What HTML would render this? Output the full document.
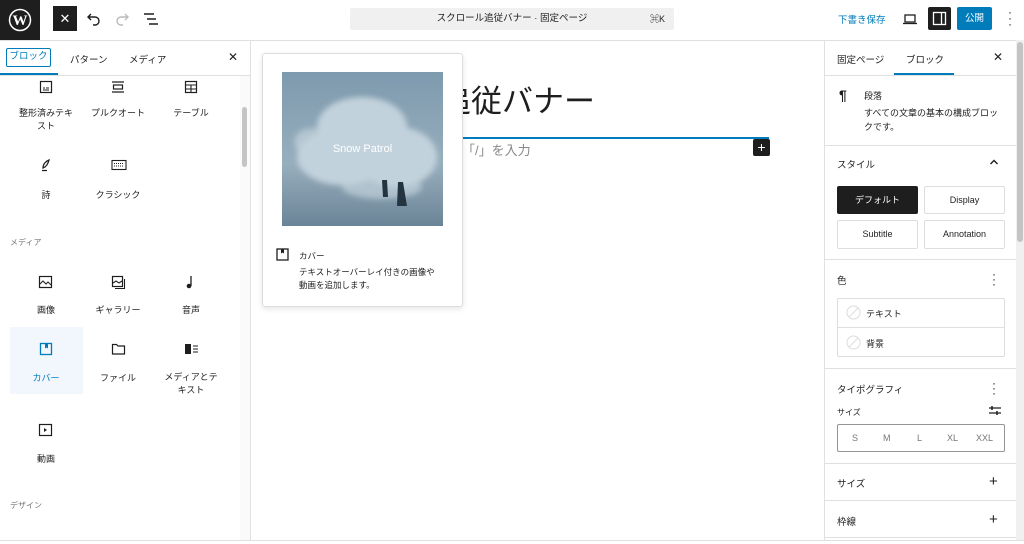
<!DOCTYPE html><html><head><meta charset="utf-8"><style>
*{box-sizing:border-box;margin:0;padding:0}
body{width:1024px;height:544px;overflow:hidden;background:#fff;font-family:"Liberation Sans","Noto Sans CJK JP",sans-serif;color:#1e1e1e;position:relative;font-size:9px}
.a{position:absolute}
.c{text-align:center}
.hl{position:absolute;height:1px;background:#e0e0e0}
.vl{position:absolute;width:1px;background:#e0e0e0}
svg{position:absolute}
</style></head><body>
<!-- top bar -->
<div class="a" style="left:0;top:0;width:40px;height:40px;background:#1e1e1e"></div>
<svg style="left:8px;top:8px" width="24" height="24" viewBox="0 0 24 24"><circle cx="12" cy="12" r="10.5" fill="none" stroke="#fff" stroke-width="1.5"/><text x="12" y="17" text-anchor="middle" font-family="Liberation Serif" font-weight="bold" font-size="15" fill="#fff">W</text></svg>
<div class="a" style="left:53px;top:6px;width:24px;height:25px;background:#1e1e1e;color:#fff;font-size:13px;text-align:center;line-height:25px">✕</div>
<svg style="left:86px;top:11px" width="16" height="16" viewBox="0 0 16 16"><path d="M5 3L2 6l3 3M2 6h7a4 4 0 0 1 0 8H7" fill="none" stroke="#1e1e1e" stroke-width="1.4"/></svg>
<svg style="left:114px;top:11px" width="16" height="16" viewBox="0 0 16 16"><path d="M11 3l3 3-3 3M14 6H7a4 4 0 0 0 0 8h2" fill="none" stroke="#bbb" stroke-width="1.4"/></svg>
<svg style="left:143px;top:12px" width="16" height="14" viewBox="0 0 16 14"><path d="M1 2h10M4 7h9M6 12h9" stroke="#1e1e1e" stroke-width="1.4"/></svg>
<div class="a" style="left:350px;top:8px;width:324px;height:22px;background:#f0f0f0;border-radius:2px"></div>
<div class="a" style="left:350px;top:8px;width:324px;line-height:22px;text-align:center;font-size:9.5px;color:#1e1e1e">スクロール追従バナー · 固定ページ</div>
<div class="a" style="left:650px;top:8px;line-height:22px;font-size:9px">⌘K</div>
<div class="a" style="left:838px;top:12px;font-size:9.5px;color:#007cba">下書き保存</div>
<svg style="left:902px;top:11px" width="16" height="16" viewBox="0 0 16 16"><rect x="3" y="4" width="10" height="7" fill="none" stroke="#1e1e1e" stroke-width="1.3"/><path d="M1 12.5h14" stroke="#1e1e1e" stroke-width="1.3"/></svg>
<div class="a" style="left:928px;top:7px;width:23px;height:23px;background:#1e1e1e;border-radius:2px"></div>
<svg style="left:932px;top:11px" width="15" height="15" viewBox="0 0 15 15"><rect x="1.5" y="1.5" width="12" height="12" fill="none" stroke="#fff" stroke-width="1.3"/><path d="M9.5 1.5v12" stroke="#fff" stroke-width="1.3"/></svg>
<div class="a" style="left:957px;top:7px;width:35px;height:23px;background:#007cba;border-radius:2px;color:#fff;font-size:9.5px;line-height:23px;text-align:center">公開</div>
<div class="a" style="left:1008px;top:9px;font-size:12px;line-height:6px;color:#1e1e1e">·<br>·<br>·</div>
<div class="hl" style="left:0;top:40px;width:1024px"></div>
<!-- left panel -->
<div class="vl" style="left:250px;top:40px;height:500px"></div>
<div class="a" style="left:240px;top:75px;width:10px;height:465px;background:#fafafa"></div>
<div class="a" style="left:242px;top:107px;width:5px;height:60px;background:#c4c4c4;border-radius:3px"></div>
<div class="a" style="left:6px;top:48px;width:45px;height:19px;border:1.5px solid #007cba;border-radius:2px;color:#007cba;font-size:9.5px;line-height:16px;text-align:center">ブロック</div>
<div class="a" style="left:70px;top:52px;font-size:9.5px">パターン</div>
<div class="a" style="left:129px;top:52px;font-size:9.5px">メディア</div>
<div class="a" style="left:228px;top:50px;font-size:12px">✕</div>
<div class="a" style="left:0;top:73px;width:58px;height:2px;background:#007cba"></div>
<div class="hl" style="left:0;top:75px;width:250px"></div>
<!-- grid icons -->
<svg style="left:39px;top:80px" width="14" height="14" viewBox="0 0 14 14"><rect x="1.5" y="1.5" width="11" height="11" fill="none" stroke="#1e1e1e" stroke-width="1.2"/><path d="M4 8h2M7 8h3M4 10h6" stroke="#1e1e1e"/></svg>
<svg style="left:111px;top:80px" width="14" height="14" viewBox="0 0 14 14"><path d="M1 2h12M1 12h12" stroke="#1e1e1e" stroke-width="1.2"/><rect x="2.5" y="5" width="9" height="4" fill="none" stroke="#1e1e1e" stroke-width="1.2"/></svg>
<svg style="left:184px;top:80px" width="14" height="14" viewBox="0 0 14 14"><rect x="1.5" y="1.5" width="11" height="11" fill="none" stroke="#1e1e1e" stroke-width="1.2"/><path d="M1.5 5h11M1.5 9h11M7 5v7.5" stroke="#1e1e1e" stroke-width="1.1"/></svg>
<div class="a c" style="left:10px;top:107px;width:72px;line-height:13px">整形済みテキ<br>スト</div>
<div class="a c" style="left:82px;top:107px;width:72px;line-height:13px">プルクオート</div>
<div class="a c" style="left:155px;top:107px;width:72px;line-height:13px">テーブル</div>
<svg style="left:39px;top:158px" width="14" height="14" viewBox="0 0 14 14"><path d="M4 10c0-4 3-7 6-8-1 4-3 7-6 8zM3 12.5h5" fill="none" stroke="#1e1e1e" stroke-width="1.3"/></svg>
<svg style="left:111px;top:159px" width="16" height="12" viewBox="0 0 16 12"><rect x="1" y="1.5" width="14" height="9" fill="none" stroke="#1e1e1e" stroke-width="1.1"/><path d="M3 4.5h10M3 7h10" stroke="#1e1e1e" stroke-dasharray="1 1"/></svg>
<div class="a c" style="left:10px;top:188px;width:72px">詩</div>
<div class="a c" style="left:82px;top:188px;width:72px">クラシック</div>
<div class="a" style="left:10px;top:237px;font-size:8px;color:#757575">メディア</div>
<svg style="left:38px;top:275px" width="15" height="14" viewBox="0 0 15 14"><rect x="1.5" y="1.5" width="12" height="11" fill="none" stroke="#1e1e1e" stroke-width="1.2"/><path d="M2 9l3-3 3 3 2-2 3 3" fill="none" stroke="#1e1e1e"/></svg>
<svg style="left:111px;top:275px" width="15" height="15" viewBox="0 0 15 15"><rect x="1.5" y="1.5" width="10" height="10" fill="none" stroke="#1e1e1e" stroke-width="1.2"/><path d="M2 8l3-2 3 2 3-2M13.5 4v9.5H4" fill="none" stroke="#1e1e1e" stroke-width="1.1"/></svg>
<svg style="left:184px;top:275px" width="12" height="14" viewBox="0 0 12 14"><path d="M7 1v10" stroke="#1e1e1e" stroke-width="1.3"/><circle cx="5" cy="11" r="2.3" fill="#1e1e1e"/></svg>
<div class="a c" style="left:10px;top:303px;width:72px">画像</div>
<div class="a c" style="left:82px;top:303px;width:72px">ギャラリー</div>
<div class="a c" style="left:155px;top:303px;width:72px">音声</div>
<div class="a" style="left:10px;top:327px;width:73px;height:67px;background:#f1f7fc"></div>
<svg style="left:39px;top:342px" width="14" height="14" viewBox="0 0 14 14"><rect x="1.5" y="1.5" width="11" height="11" fill="none" stroke="#007cba" stroke-width="1.3"/><path d="M6 1.5h3v5l-1.5-1-1.5 1z" fill="#007cba"/></svg>
<div class="a c" style="left:10px;top:371px;width:72px;color:#007cba">カバー</div>
<svg style="left:111px;top:342px" width="15" height="14" viewBox="0 0 15 14"><path d="M1.5 2.5h4l1.5 1.5h6.5v8h-12z" fill="none" stroke="#1e1e1e" stroke-width="1.2"/></svg>
<svg style="left:184px;top:343px" width="15" height="12" viewBox="0 0 15 12"><rect x="1" y="1" width="6" height="10" fill="#1e1e1e"/><path d="M9 3h5M9 6h5M9 9h5" stroke="#1e1e1e"/></svg>
<div class="a c" style="left:82px;top:371px;width:72px">ファイル</div>
<div class="a c" style="left:155px;top:371px;width:72px;line-height:13px">メディアとテ<br>キスト</div>
<svg style="left:38px;top:423px" width="15" height="14" viewBox="0 0 15 14"><rect x="1.5" y="1.5" width="12" height="11" fill="none" stroke="#1e1e1e" stroke-width="1.2"/><path d="M6 5v4l3-2z" fill="#1e1e1e"/></svg>
<div class="a c" style="left:10px;top:452px;width:72px">動画</div>
<div class="a" style="left:10px;top:500px;font-size:8px;color:#757575">デザイン</div>
<!-- canvas -->
<div class="a" style="left:440px;top:82px;font-size:31px;line-height:40px">追従バナー</div>
<div class="a" style="left:463px;top:137px;width:306px;height:2px;background:#007cba"></div>
<div class="a" style="left:462px;top:140px;font-size:13px;color:#888">「/」を入力</div>
<div class="a" style="left:753px;top:139px;width:17px;height:17px;background:#1e1e1e;color:#fff;font-size:14px;line-height:16px;text-align:center;border-radius:2px">+</div>
<!-- popover -->
<div class="a" style="left:262px;top:53px;width:201px;height:254px;background:#fff;border:1px solid #ddd;border-radius:3px;box-shadow:0 2px 6px rgba(0,0,0,.1)"></div>
<svg style="left:282px;top:72px" width="161" height="154" viewBox="0 0 161 154"><defs><linearGradient id="g" x1="0" y1="0" x2="0" y2="1"><stop offset="0" stop-color="#7e9aae"/><stop offset=".6" stop-color="#97aebd"/><stop offset=".72" stop-color="#8aa1b1"/><stop offset="1" stop-color="#6a8497"/></linearGradient><filter id="b"><feGaussianBlur stdDeviation="3"/></filter></defs><rect width="161" height="154" fill="url(#g)"/><g filter="url(#b)" fill="#c2d2dc"><ellipse cx="80" cy="55" rx="45" ry="30"/><ellipse cx="60" cy="85" rx="45" ry="28"/><ellipse cx="115" cy="85" rx="40" ry="30"/><ellipse cx="100" cy="115" rx="40" ry="12" opacity=".7"/><ellipse cx="30" cy="70" rx="18" ry="14" opacity=".7"/></g><path d="M116 110l-1 24h10l-4-24zM100 108l1 17h5l-1-17z" fill="#243440"/></svg>
<div class="a c" style="left:282px;top:143px;width:161px;color:#fff;font-size:11px">Snow Patrol</div>
<svg style="left:276px;top:248px" width="13" height="13" viewBox="0 0 13 13"><rect x="1" y="1" width="11" height="11" fill="none" stroke="#1e1e1e" stroke-width="1.3"/><path d="M5 1h3v4.5l-1.5-1-1.5 1z" fill="#1e1e1e"/></svg>
<div class="a" style="left:299px;top:250px;font-size:8.5px">カバー</div>
<div class="a" style="left:299px;top:266px;font-size:8.5px;line-height:13px">テキストオーバーレイ付きの画像や<br>動画を追加します。</div>
<!-- right panel -->
<div class="vl" style="left:824px;top:40px;height:500px"></div>
<div class="a" style="left:1016px;top:40px;width:8px;height:500px;background:#f0f0f0"></div>
<div class="a" style="left:1017px;top:42px;width:6px;height:200px;background:#c4c4c4;border-radius:3px"></div>
<div class="a" style="left:837px;top:52px;font-size:9.5px">固定ページ</div>
<div class="a" style="left:906px;top:52px;font-size:9.5px">ブロック</div>
<div class="a" style="left:993px;top:50px;font-size:12px">✕</div>
<div class="a" style="left:894px;top:73px;width:60px;height:2px;background:#007cba"></div>
<div class="hl" style="left:825px;top:75px;width:191px"></div>
<div class="a" style="left:839px;top:87px;font-size:14px;font-weight:bold">¶</div>
<div class="a" style="left:864px;top:89px;font-size:9px">段落</div>
<div class="a" style="left:864px;top:106px;font-size:9px;line-height:14px">すべての文章の基本の構成ブロッ<br>クです。</div>
<div class="hl" style="left:825px;top:145px;width:191px"></div>
<div class="a" style="left:837px;top:157px;font-size:9.5px">スタイル</div>
<svg style="left:989px;top:158px" width="10" height="8" viewBox="0 0 10 8"><path d="M1.5 6l3.5-3.5L8.5 6" fill="none" stroke="#1e1e1e" stroke-width="1.4"/></svg>
<div class="a c" style="left:837px;top:186px;width:81px;height:28px;background:#1e1e1e;color:#fff;line-height:28px;border-radius:2px">デフォルト</div>
<div class="a c" style="left:924px;top:186px;width:81px;height:28px;border:1px solid #ddd;line-height:26px;border-radius:2px">Display</div>
<div class="a c" style="left:837px;top:220px;width:81px;height:29px;border:1px solid #ddd;line-height:27px;border-radius:2px">Subtitle</div>
<div class="a c" style="left:924px;top:220px;width:81px;height:29px;border:1px solid #ddd;line-height:27px;border-radius:2px">Annotation</div>
<div class="hl" style="left:825px;top:259px;width:191px"></div>
<div class="a" style="left:837px;top:273px;font-size:9.5px">色</div>
<div class="a" style="left:992px;top:272px;font-size:12px;line-height:5px">·<br>·<br>·</div>
<div class="a" style="left:837px;top:298px;width:168px;height:59px;border:1px solid #ddd;border-radius:2px"></div>
<div class="hl" style="left:838px;top:327px;width:166px"></div>
<svg style="left:846px;top:305px" width="15" height="15"><circle cx="7.5" cy="7.5" r="6.5" fill="none" stroke="#ddd"/><path d="M3 12L12 3" stroke="#ddd"/></svg>
<svg style="left:846px;top:335px" width="15" height="15"><circle cx="7.5" cy="7.5" r="6.5" fill="none" stroke="#ddd"/><path d="M3 12L12 3" stroke="#ddd"/></svg>
<div class="a" style="left:866px;top:307px">テキスト</div>
<div class="a" style="left:866px;top:337px">背景</div>
<div class="hl" style="left:825px;top:368px;width:191px"></div>
<div class="a" style="left:837px;top:382px;font-size:9.5px">タイポグラフィ</div>
<div class="a" style="left:992px;top:381px;font-size:12px;line-height:5px">·<br>·<br>·</div>
<div class="a" style="left:837px;top:407px;font-size:8px">サイズ</div>
<svg style="left:989px;top:405px" width="12" height="11"><path d="M0 3h12M0 8h12" stroke="#1e1e1e" stroke-width="1.2"/><path d="M3 1v4M8 6v4" stroke="#1e1e1e" stroke-width="1.5"/></svg>
<div class="a" style="left:837px;top:424px;width:168px;height:28px;border:1px solid #949494;border-radius:2px"></div>
<div class="a" style="left:852px;top:433px;color:#757575">S</div>
<div class="a" style="left:883px;top:433px;color:#757575">M</div>
<div class="a" style="left:917px;top:433px;color:#757575">L</div>
<div class="a" style="left:947px;top:433px;color:#757575">XL</div>
<div class="a" style="left:976px;top:433px;color:#757575">XXL</div>
<div class="hl" style="left:825px;top:463px;width:191px"></div>
<div class="a" style="left:837px;top:476px;font-size:9.5px">サイズ</div>
<div class="a" style="left:989px;top:473px;font-size:15px">+</div>
<div class="hl" style="left:825px;top:500px;width:191px"></div>
<div class="a" style="left:837px;top:514px;font-size:9.5px">枠線</div>
<div class="a" style="left:989px;top:511px;font-size:15px">+</div>
<div class="hl" style="left:825px;top:537px;width:191px"></div>
<div class="hl" style="left:0;top:540px;width:1024px"></div>
</body></html>
